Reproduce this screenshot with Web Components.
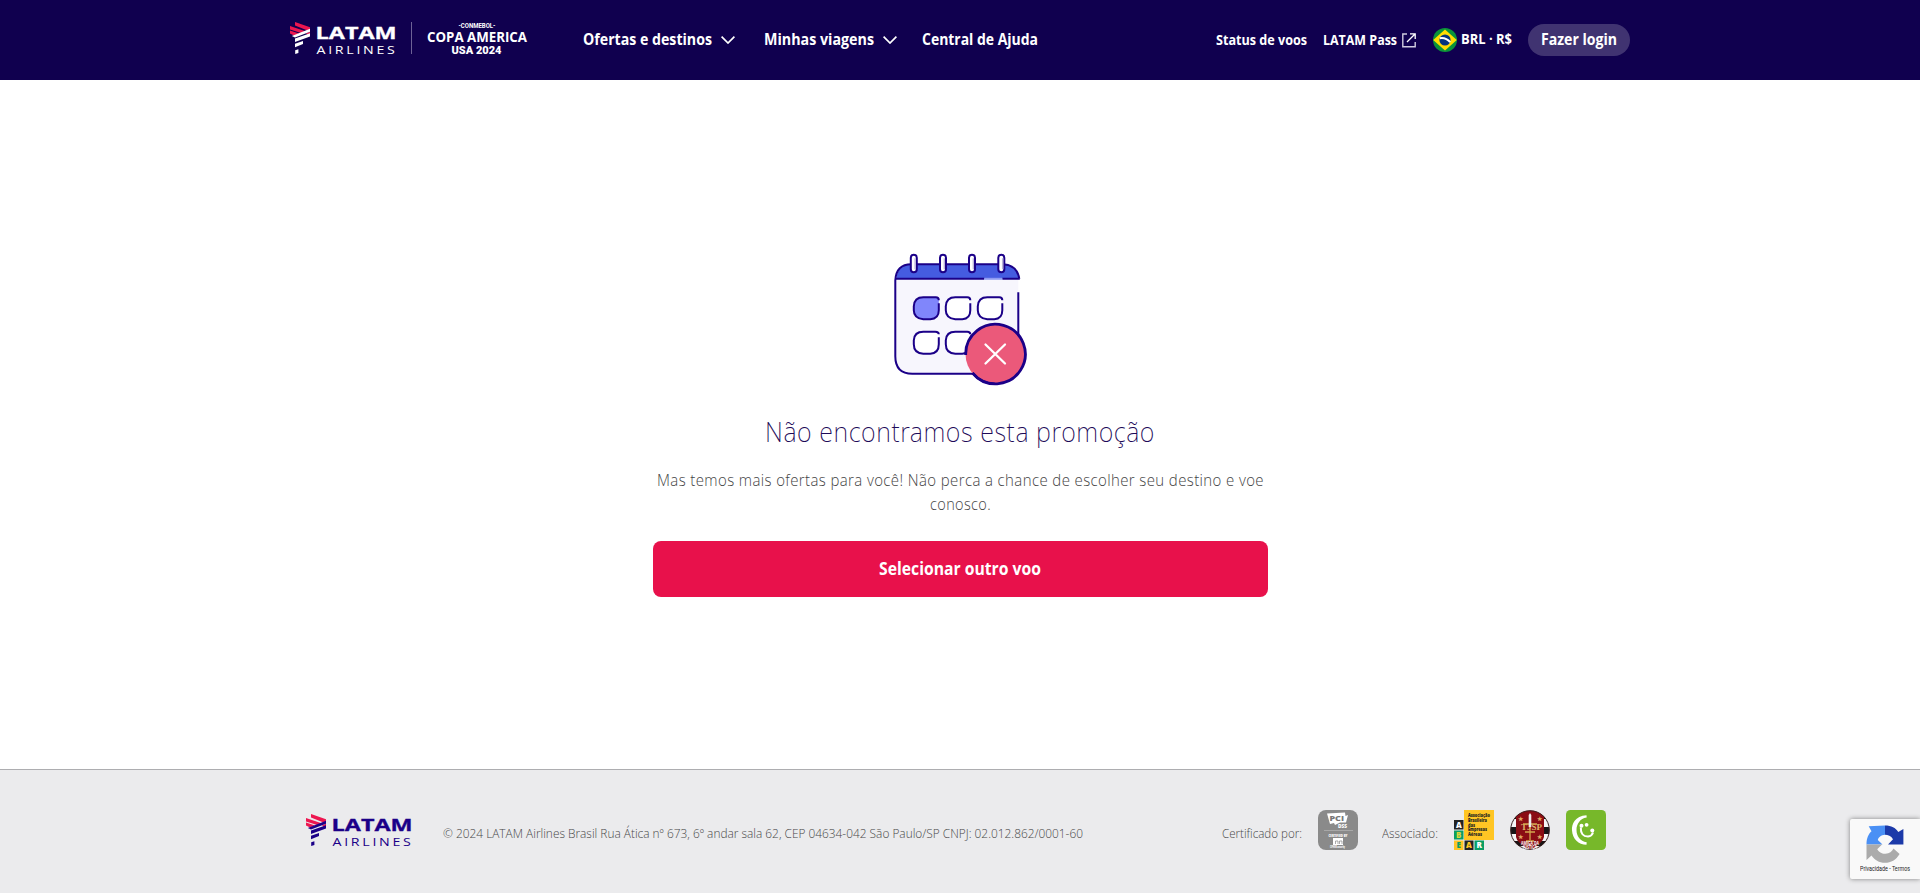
<!DOCTYPE html>
<html lang="pt-BR">
<head>
<meta charset="utf-8">
<title>LATAM Airlines</title>
<style>
html,body{margin:0;height:100%;background:#fff}
body{font-family:"Open Sans","Noto Sans",sans-serif;overflow:hidden}
</style>
</head>
<body>
<latam-page></latam-page>
<script>
const define = (name, html, after) => {
  const tpl = document.createElement('template');
  tpl.innerHTML = html;
  customElements.define(name, class extends HTMLElement {
    constructor() {
      super();
      this.attachShadow({mode: 'open'}).append(tpl.content.cloneNode(true));
    }
    connectedCallback() { if (after) after(this); }
  });
};

// Text set to a given width, condensing the face as needed.
define('fit-text', `<style>
:host{display:block;flex:none;white-space:nowrap}
span{display:inline-block;transform-origin:0 50%}
</style><span><slot></slot></span>`, el => {
  const s = el.shadowRoot.querySelector('span');
  const w = +el.getAttribute('w');
  el.style.width = w + 'px';
  s.style.transform = 'scaleX(' + (w / s.getBoundingClientRect().width) + ')';
});

define('latam-logo', `<style>
:host{display:block;flex:none;width:106px;height:33px}
svg{display:block;overflow:visible}
text{font-family:"Open Sans",sans-serif;fill:currentColor}
</style>
<svg width="106" height="33" viewBox="0 0 106 33">
<g fill="#ed1650"><path d="M5 0 20 5.2V8L17.5 8.6 5 3.6Z"/><path d="M0 4 15.5 9.3 11 11.1 0 7.6Z"/><path d="M0 8.4 9 11.6 4 13.4 0 11.6Z"/><path d="M16 11.6 20 9.8V12.8L18.4 13.4Z"/></g>
<g fill="currentColor"><path d="M1.8 14.1 20 6.8V9.8L5 15.6Z"/><path d="M5 16.4 20 11.2V14.4L5 20.1Z"/><path d="M5 21.8 13 19V22L5 25.2Z"/><path d="M5.2 28.2 8.4 27.2V31L5.2 32Z"/></g>
<text x="25.600" y="16.600" font-size="15.600" font-weight="700" textLength="81" lengthAdjust="spacingAndGlyphs" stroke="currentColor" stroke-width=".3">LATAM</text>
<text x="26.500" y="32" font-size="10.600" font-weight="500" textLength="81" lengthAdjust="spacingAndGlyphs" letter-spacing="2">AIRLINES</text>
</svg>`);

define('copa-logo', `<style>
:host{display:block;flex:none;width:100px;height:32px}
svg{display:block;overflow:visible}
text{fill:#fff;font-family:Roboto,sans-serif;font-weight:900}
</style>
<svg width="100" height="32" viewBox="0 0 100 32">
<text x="31.500" y="5.800" font-size="7.400" textLength="37" lengthAdjust="spacingAndGlyphs" style="font-weight:700">-CONMEBOL-</text>
<text x="0" y="19.700" font-size="13.400" textLength="100" lengthAdjust="spacingAndGlyphs" style="font-family:'Open Sans',sans-serif;font-weight:700">COPA AMERICA</text>
<text x="24.500" y="31.700" font-size="11" textLength="50" lengthAdjust="spacingAndGlyphs">USA 2024</text>
</svg>`);

define('chevron-icon', `<style>:host{display:block;flex:none;width:14px;height:8px}svg{display:block}</style>
<svg width="14" height="8" viewBox="0 0 14 8"><path d="M.6.700 7 7 13.400.700" fill="none" stroke="#fff" stroke-width="1.700"/></svg>`);

define('external-icon', `<style>:host{display:block;flex:none;width:14px;height:15px}svg{display:block}</style>
<svg width="14" height="15" viewBox="0 0 14 15" fill="none" stroke="#fff"><path d="M5 1H.8V13.800H13.200V9" stroke="#d0cce0" stroke-width="1.400"/><path d="M8 .8H13.200V6M13 1 5 9" stroke-width="1.300"/></svg>`);

define('brazil-flag', `<style>:host{display:block;flex:none;width:24px;height:24px}svg{display:block}</style>
<svg width="24" height="24" viewBox="0 0 24 24"><circle cx="12" cy="12" r="12" fill="#0a9339"/><path d="M12 1.400 23.800 12 12 22.600.2 12Z" fill="#fd0"/><circle cx="12" cy="12" r="5.600" fill="#04347c"/><path d="M6.800 10.200Q13 9.200 17.200 14.200" stroke="#fff" stroke-width="2" fill="none"/></svg>`);

define('site-header', `<style>
:host{display:block;height:80px;background:#10004f;color:#fff}
.in{display:flex;align-items:center;height:80px;box-sizing:border-box;width:1340px;margin:0 auto;font-weight:700}
latam-logo{margin-top:-3px}
.bar{width:1px;height:32px;margin:-4px 15px 0 15px;background:#6d6296}
copa-logo{margin-top:-4px}
nav{display:flex;align-items:center;margin-left:56px;font-size:16px;line-height:22px}
nav fit-text{margin-top:-2px}
nav chevron-icon{margin-left:9px}
.two{margin-left:29px}.three{margin-left:25px}
.right{display:flex;align-items:center;margin-left:auto;font-size:14px;line-height:20px}
external-icon{margin:1px 17px 0 5px}
.s{margin-right:16px}
.cur{margin:-1px 16px 1px 4px}
button{all:unset;box-sizing:border-box;width:102px;height:32px;border-radius:16px;background:#403371;padding:0 13px 2px;font:700 16px/20px "Open Sans",sans-serif}
</style>
<div class="in"><latam-logo></latam-logo><div class="bar"></div><copa-logo></copa-logo>
<nav><fit-text w="129">Ofertas e destinos</fit-text><chevron-icon></chevron-icon>
<fit-text class="two" w="110">Minhas viagens</fit-text><chevron-icon></chevron-icon>
<fit-text class="three" w="116">Central de Ajuda</fit-text></nav>
<div class="right"><fit-text class="s" w="91">Status de voos</fit-text><fit-text w="74">LATAM Pass</fit-text><external-icon></external-icon>
<brazil-flag></brazil-flag><fit-text class="cur" w="51">BRL · R$</fit-text>
<button><fit-text w="76">Fazer login</fit-text></button></div></div>`);

define('calendar-art', `<style>:host{display:block;width:134px;height:132px}svg{display:block;overflow:visible}</style>
<svg width="134" height="132" viewBox="0 0 134 132" fill="none" stroke="#1b0088" stroke-width="2">
<g transform="translate(1.300 .3)">
<path d="M1 25V103Q2 119.500 18 119.500H108Q124 119.500 124 104V25Z" fill="#f7f6fd" stroke="none"/>
<path d="M2 24.500Q3 11 17 10H109Q123 10 125 24.500Z" fill="#455ce0" stroke="none"/>
<path d="M97 119.500H18Q1 119.500 1 102V26Q2 10 17 10H109Q123 11 125 24.500M1 24.500H90M108 24.500H125.500M124 38V85"/>
<path d="M90 24.500H108" stroke="#8f9bf2"/>
<g fill="#fff"><rect x="16.500" y=".5" width="6" height="17.500" rx="3"/><rect x="45.700" y=".5" width="6" height="17.500" rx="3"/><rect x="74.700" y=".5" width="6" height="17.500" rx="3"/><rect x="104" y=".5" width="6" height="17.500" rx="3"/></g>
<g stroke="#b9b3d8" stroke-width="1.300"><path d="M20.800 4V15M50 4V15M79 4V15M108.300 4V15"/></g>
<g fill="#fff"><path d="M44.500 49V56Q44.500 64.500 36 65H29Q19.500 64 19.500 56V52Q20 43 29 43H41.500Q44.500 43 44.500 46" fill="#8086fb"/>
<path d="M76 49V56Q76 64.500 68 65H61Q51.500 64 51.500 56V52Q52 43 61 43H73Q76 43 76 46"/>
<path d="M108 49V56Q108 64.500 100 65H93Q83.500 64 83.500 56V52Q84 43 93 43H105Q108 43 108 46"/>
<path d="M44.500 83V90Q44.500 99 36 99.500H29Q19.500 99 19.500 90V86Q20 77.500 29 77.500H41Q44.500 77.500 44.500 80"/>
<path d="M76 83V90Q76 99 68 99.500H61Q51.500 99 51.500 90V86Q52 77.500 61 77.500H73Q76 77.500 76 80"/></g></g>
<circle cx="102.500" cy="100" r="30" fill="#eb597a" stroke="none"/>
<path d="M72.700 101A29.800 29.800 0 1 1 79.500 119" stroke-width="2.800"/>
<path d="M79.500 119A29.800 29.800 0 0 0 102 129.800" stroke-width="2.200"/>
<path d="M92.500 90.500 112 109.500M112 90.500 92.500 109.500" stroke="#fff" stroke-width="2.300" stroke-linecap="round"/>
</svg>`);

define('empty-promo', `<style>
:host{display:flex;flex-direction:column;align-items:center;box-sizing:border-box;height:689px;padding-top:174px}
calendar-art{margin-left:-1px}
h1{margin:26px 0 0;font-family:"Noto Sans","Open Sans",sans-serif;font-size:27px;line-height:40px;font-weight:200;letter-spacing:.6px;color:#1d0a58}
p{margin:16px 0 0;font-size:15.500px;line-height:24px;color:#444;display:flex;flex-direction:column;align-items:center;font-weight:350;letter-spacing:.4px}
button{all:unset;display:flex;justify-content:center;align-items:center;width:615px;height:56px;margin-top:25px;background:#e8114b;color:#fff;border-radius:8px;font-size:18px;font-weight:700}
button fit-text{margin-top:-3px}
</style>
<calendar-art></calendar-art>
<h1><fit-text w="390">Não encontramos esta promoção</fit-text></h1>
<p><fit-text w="607">Mas temos mais ofertas para você! Não perca a chance de escolher seu destino e voe</fit-text><fit-text w="61">conosco.</fit-text></p>
<button><fit-text w="162">Selecionar outro voo</fit-text></button>`);

define('pci-badge', `<style>:host{display:block;flex:none;width:40px;height:40px}svg{display:block}text{font-family:"Open Sans",sans-serif;font-weight:800}</style>
<svg width="40" height="40" viewBox="0 0 40 40"><rect width="40" height="40" rx="8" fill="#8a8a8a"/>
<path d="M9 3.500 27 2.500 27.500 6 30 5 28 12.500H22L17 15 16 13 12 14Z" fill="#fff"/><text x="11.500" y="11.300" font-size="7.500" fill="#777" textLength="14.500" lengthAdjust="spacingAndGlyphs">PCI</text>
<text x="20" y="17.800" font-size="5" fill="#fff" textLength="9" lengthAdjust="spacingAndGlyphs">DSS</text><path d="M6 20.500H35" stroke="#b5b5b5" stroke-width=".7"/>
<text x="10.500" y="26.800" font-size="3.800" fill="#fff" textLength="19" lengthAdjust="spacingAndGlyphs">CERTIFIED BY</text>
<path d="M15 28H25V35H15Z" fill="#fff"/><path d="M17.500 34V31H20V34M21.500 34V31H24V34" fill="none" stroke="#888" stroke-width=".7"/>
<text x="12" y="38.300" font-size="3.300" fill="#fff" textLength="15" lengthAdjust="spacingAndGlyphs">CIPHER security</text></svg>`);

define('abear-badge', `<style>:host{display:block;flex:none;width:40px;height:40px}svg{display:block}text{font-family:"Open Sans",sans-serif;font-weight:800}</style>
<svg width="40" height="40" viewBox="0 0 40 40"><path d="M10 0H40V30H10Z" fill="#ffc524"/>
<path d="M0 10H9.500V19.500H0ZM10.500 30.500H19.500V40H10.500Z" fill="#222"/><path d="M0 20.500H9.500V29.500H0ZM20.500 30.500H30V40H20.500Z" fill="#099e65"/><path d="M0 30.500H9.500V40H0Z" fill="#ffc524"/>
<g font-size="8" text-anchor="middle"><text x="4.800" y="17.700" fill="#fff">A</text><text x="4.800" y="27.900" fill="#d9d63a">B</text><text x="4.800" y="38.200" fill="#099e65">E</text><text x="15" y="38.200" fill="#ffc524">A</text><text x="25.300" y="38.200" fill="#fff">R</text></g>
<g font-size="4.400" fill="#222"><text x="14" y="7" textLength="22" lengthAdjust="spacingAndGlyphs">Associação</text><text x="14" y="11.800" textLength="19" lengthAdjust="spacingAndGlyphs">Brasileira</text><text x="14" y="16.500" textLength="7" lengthAdjust="spacingAndGlyphs">das</text><text x="14" y="21" textLength="19" lengthAdjust="spacingAndGlyphs">Empresas</text><text x="14" y="25.700" textLength="14" lengthAdjust="spacingAndGlyphs">Aéreas</text></g></svg>`);

define('tjsp-badge', `<style>:host{display:block;flex:none;width:40px;height:40px}svg{display:block}text{font-family:"Liberation Serif",serif;font-weight:700}</style>
<svg width="40" height="40" viewBox="0 0 40 40"><defs><clipPath id="k"><circle cx="20" cy="20" r="19.500"/></clipPath></defs>
<g clip-path="url(#k)"><path d="M0 0H40V40H0Z" fill="#f5f5f5"/><path d="M0 4H40V9H0ZM0 17H40V24H0ZM0 31H40V36H0Z" fill="#191516"/><path d="M6 4Q20-4 34 4V27Q33 33 20 40 7 33 6 27Z" fill="#8a0d14"/></g><circle cx="20" cy="20" r="19.300" fill="none" stroke="#3b2222"/>
<g fill="#e0ac66" font-size="5.500"><text x="8" y="11">★</text><text x="27" y="11">★</text><text x="8" y="29">★</text><text x="27" y="29">★</text></g>
<text x="11" y="20" font-size="9" fill="#deb36a">TJ</text><text x="21.500" y="20" font-size="9" fill="#deb36a">SP</text>
<path d="M20 13V30M13 14H27M16 31H24M15 22H25" stroke="#d3a64f" stroke-width="1.300"/><path d="M18.700 5 20 3 21.300 5V17H18.700Z" fill="#eee"/>
<text x="11" y="35.400" font-size="5" fill="#fff" style="font-family:'Open Sans',sans-serif" textLength="18" lengthAdjust="spacingAndGlyphs">AMIGA DA</text><text x="13" y="39" font-size="4.300" fill="#fff" style="font-family:'Open Sans',sans-serif" textLength="14" lengthAdjust="spacingAndGlyphs">JUSTIÇA</text></svg>`);

define('consumer-badge', `<style>:host{display:block;flex:none;width:40px;height:40px}svg{display:block}</style>
<svg width="40" height="40" viewBox="0 0 40 40"><rect width="40" height="40" rx="4.500" fill="#77b82a"/><path d="M20.500 5.200C9 6 5.500 14 6 20.500 6.500 29 12.500 34.500 20.500 34.800L20.700 32.300C14 31 10.500 26 10.500 20 10.500 14 14 8.500 20.700 7.500Z" fill="#fff"/><path d="M14.800 17.500Q14.500 26.500 22 26.500 26 26 27 22.500" fill="none" stroke="#fff" stroke-width="2"/><g fill="#fff"><circle cx="15.500" cy="15.700" r="2"/><circle cx="20.600" cy="14.800" r="1.900"/><circle cx="26.300" cy="20.600" r="2"/></g></svg>`);

define('site-footer', `<style>
:host{display:block;height:124px;box-sizing:border-box;border-top:1px solid #adadb0;background:#ebebed;color:#484848}
.in{display:flex;align-items:center;height:120px;width:1300px;margin:0 auto;font-size:12.500px;line-height:16px;font-weight:350}
latam-logo{margin:1px 31px 0 -4px;color:#1b0088}
.in fit-text{margin-top:7px}
.c{margin:0 16px 0 139px}
.a{margin:0 16px 0 24px}
abear-badge,tjsp-badge{margin-right:16px}
</style>
<div class="in"><latam-logo></latam-logo><fit-text w="640">© 2024 LATAM Airlines Brasil Rua Ática nº 673, 6º andar sala 62, CEP 04634-042 São Paulo/SP CNPJ: 02.012.862/0001-60</fit-text>
<fit-text class="c" w="80">Certificado por:</fit-text><pci-badge></pci-badge><fit-text class="a" w="56">Associado:</fit-text><abear-badge></abear-badge><tjsp-badge></tjsp-badge><consumer-badge></consumer-badge></div>`);

define('recaptcha-badge', `<style>
:host{position:absolute;right:0;top:819px;width:70px;height:60px;box-sizing:border-box;padding:6px 0 0 10px;background:#f9f9f9;border-radius:2px 0 0 2px;box-shadow:0 0 5px #808080;color:#222;font:7px/10px Roboto,sans-serif}
svg{display:block;margin-left:6px}fit-text{margin-top:1px}
</style>
<svg width="38" height="38" viewBox="0 0 38 38"><path d="M19 .6V9.800C15 10 12.500 12.500 11.800 15L16.500 19.500H.5C.5 13 2.500 9 5.500 6.200L2.700 1.200Z" fill="#4a90f5"/><path d="M19 .6C25.500.6 29.500 3 32.300 7L37.400 4V19.500H22L27 14.200C25 11 22 9.800 19 9.800Z" fill="#1c3aa9"/><path d="M.5 19.500H16L11.200 24.300C14 28.500 17 28.800 19.500 28.800 23.500 28.500 26 26.500 27.500 23.500L33.600 29C30 35 25 37.800 19 37.800 13 37.800 8.500 35 5.500 30.500L.5 35Z" fill="#ababab"/></svg>
<fit-text w="50">Privacidade - Termos</fit-text>`);

define('latam-page', `<style>:host{display:block;position:relative;height:893px;overflow:hidden}</style>
<site-header></site-header><empty-promo></empty-promo><site-footer></site-footer><recaptcha-badge></recaptcha-badge>`);
</script>
</body>
</html>
